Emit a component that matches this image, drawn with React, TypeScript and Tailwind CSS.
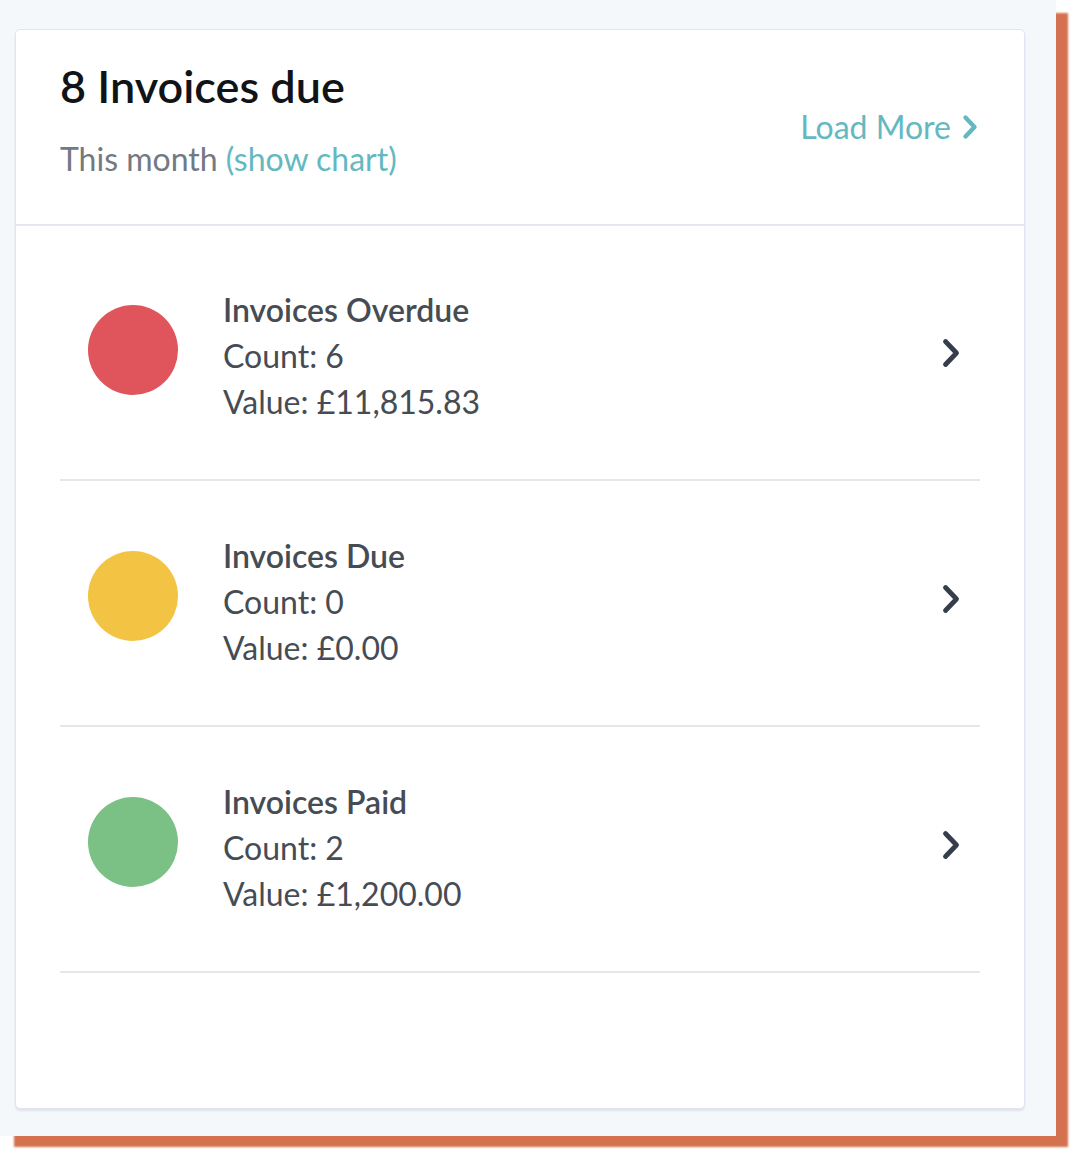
import React from "react";

const rows = [
  { title: "Invoices Overdue", count: "6", value: "£11,815.83", color: "bg-[#e0545c]" },
  { title: "Invoices Due", count: "0", value: "£0.00", color: "bg-[#f3c443]" },
  { title: "Invoices Paid", count: "2", value: "£1,200.00", color: "bg-[#7bc084]" },
];

function SmallChevron() {
  return (
    <svg viewBox="0 0 16 26" className="w-[16px] h-[26px]" fill="none" stroke="currentColor" strokeWidth={4.4} strokeLinecap="round" strokeLinejoin="round">
      <path d="M3.5 3.5L12.5 13L3.5 22.5" />
    </svg>
  );
}

function RowChevron() {
  return (
    <svg viewBox="0 0 18 30" className="w-[18px] h-[30px]" fill="none" stroke="currentColor" strokeWidth={4.8} strokeLinecap="round" strokeLinejoin="round">
      <path d="M3.5 3.5L14.5 15L3.5 26.5" />
    </svg>
  );
}

export default function App() {
  return (
    <div className="min-h-[1152px] bg-white" style={{ fontFamily: "Lato, 'Noto Sans', sans-serif" }}>
      <div className="w-[1056px] h-[1136px] bg-[#f5f8fb] shadow-[13px_12px_2px_-1px_#d4714f] pt-[29px] pl-[15px]">
        <div className="w-[1010px] h-[1080px] bg-white border border-[#e2e5ef] rounded-[5px] shadow-[0_2px_2px_rgba(200,205,225,0.5)] flex flex-col">
          <div className="h-[196px] border-b-2 border-[#e4e6f0] flex items-start justify-between pl-[44px] pr-[46px]">
            <div className="flex flex-col pt-[29px]">
              <div className="text-[45px] leading-[54px] font-semibold text-[#111417]">8 Invoices due</div>
              <div className="text-[32px] leading-[40px] text-[#737983] mt-[26px]">
                This month <span className="text-[#64b8c1]">(show chart)</span>
              </div>
            </div>
            <div className="self-center flex items-center gap-[11px] text-[32px] leading-[40px] text-[#64b8c1]">
              <span>Load More</span>
              <SmallChevron />
            </div>
          </div>
          <div className="px-[44px] pt-[9px]">
            {rows.map((r) => (
              <div key={r.title} className="flex items-start border-b-2 border-[#e6e6e6] pt-[52px] pb-[54px] pl-[28px] pr-[20px]">
                <div className={`w-[90px] h-[90px] rounded-full ${r.color} mt-[18px] shrink-0`} />
                <div className="ml-[45px] flex-1 text-[32px] leading-[46px] text-[#464c54]">
                  <div className="font-semibold">{r.title}</div>
                  <div>Count: {r.count}</div>
                  <div>Value: {r.value}</div>
                </div>
                <div className="self-center text-[#363d4b] -mt-[6px]">
                  <RowChevron />
                </div>
              </div>
            ))}
          </div>
        </div>
      </div>
    </div>
  );
}
